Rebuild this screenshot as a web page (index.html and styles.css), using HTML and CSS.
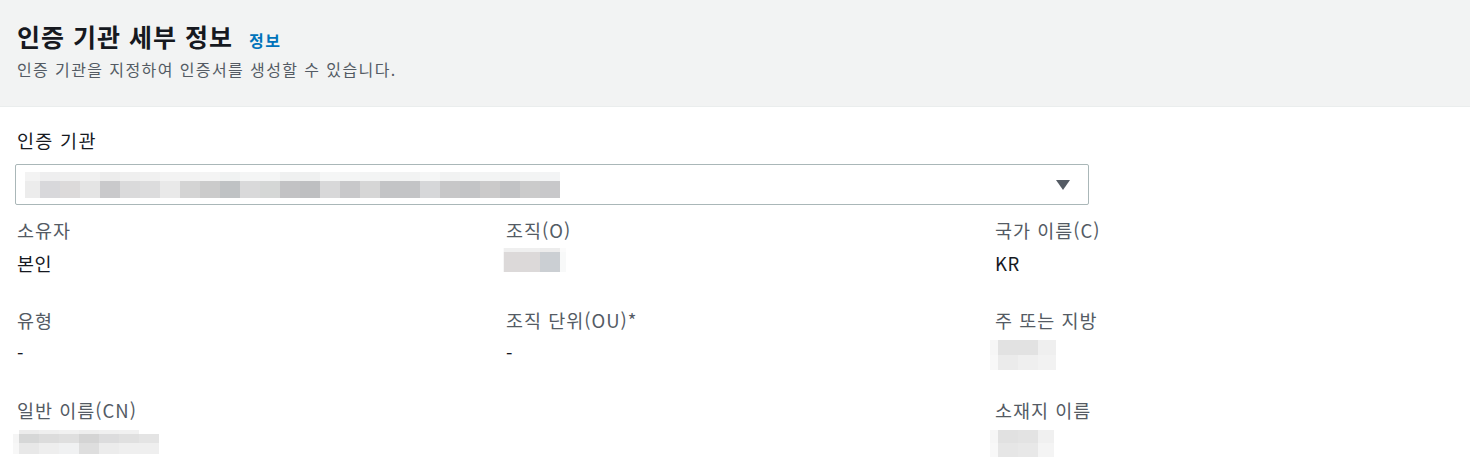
FILE: index.html
```html
<!DOCTYPE html>
<html lang="ko">
<head>
<meta charset="utf-8">
<link rel="stylesheet" href="styles.css">
</head>
<body>
<div class="panel">
  <header class="head">
    <div class="title-row">
      <h2 class="title">인증 기관 세부 정보</h2>
      <a class="info">정보</a>
    </div>
    <p class="desc">인증 기관을 지정하여 인증서를 생성할 수 있습니다.</p>
  </header>
  <div class="body">
    <div class="field">
      <label class="field-label">인증 기관</label>
      <div class="select">
        <div class="blur blur-select">
          <span style="width:15px;--t:#f3f3f3;--b:#ececec"></span><span style="--t:#eeeeef;--b:#d8d8db"></span><span style="--t:#efefef;--b:#dcdada"></span><span style="--t:#f0f0f0;--b:#e4e4e4"></span><span style="--t:#ececec;--b:#c9c9cb"></span><span style="--t:#efefef;--b:#dadadb"></span><span style="--t:#f0f0f0;--b:#dcdcdd"></span><span style="--t:#f3f3f3;--b:#e9e9e9"></span><span style="--t:#f3f3f3;--b:#d4d4d4"></span><span style="--t:#f4f4f4;--b:#cbcbcb"></span><span style="--t:#f0f2f2;--b:#bfc2c4"></span><span style="--t:#f4f5f5;--b:#d9d9da"></span><span style="--t:#f4f5f5;--b:#d5d7d6"></span><span style="--t:#eff0f0;--b:#c2c2c4"></span><span style="--t:#eff0f0;--b:#bebfc1"></span><span style="--t:#f5f6f6;--b:#d8d8d9"></span><span style="--t:#f4f5f5;--b:#c8c8ca"></span><span style="--t:#f3f4f4;--b:#d6d6d6"></span><span style="--t:#f2f3f3;--b:#c3c4c6"></span><span style="--t:#f2f3f3;--b:#c3c4c6"></span><span style="--t:#f5f6f6;--b:#d6d7d9"></span><span style="--t:#f1f2f2;--b:#c7c7c8"></span><span style="--t:#f3f4f4;--b:#c3c4c6"></span><span style="--t:#f3f4f4;--b:#cbcaca"></span><span style="--t:#f2f3f3;--b:#c2c3c5"></span><span style="--t:#f3f4f4;--b:#cbcbcb"></span><span style="--t:#f3f4f5;--b:#c8c8ca"></span>
        </div>
        <svg class="caret" width="14" height="10" viewBox="0 0 14 10"><path d="M0 0 H14 L7 10 Z" fill="#545b64"/></svg>
      </div>
    </div>
    <div class="grid">
      <div class="kv">
        <div class="k">소유자</div>
        <div class="v">본인</div>
      </div>
      <div class="kv">
        <div class="k">조직(O)</div>
        <div class="v"><div class="blur blur-org"><span style="width:1px;--t:#fafafa;--b:#f6f6f6"></span><span style="width:36px;--t:#efefef;--b:#dcd9d9"></span><span style="--t:#ececec;--b:#cbcfd3"></span><span style="width:6px;--t:#fbfbfb;--b:#f8f9f9"></span></div></div>
      </div>
      <div class="kv">
        <div class="k">국가 이름(C)</div>
        <div class="v">KR</div>
      </div>
      <div class="kv">
        <div class="k">유형</div>
        <div class="v">-</div>
      </div>
      <div class="kv">
        <div class="k">조직 단위(OU)*</div>
        <div class="v">-</div>
      </div>
      <div class="kv">
        <div class="k">주 또는 지방</div>
        <div class="v"><div class="blur blur-state"><span style="width:8px;--t:#f6f6f6;--b:#f8f8f8"></span><span style="--t:#e2e2e2;--b:#ebebeb"></span><span style="--t:#e2e2e2;--b:#efefef"></span><span style="width:18px;--t:#efefef;--b:#f2f2f2"></span></div></div>
      </div>
      <div class="kv">
        <div class="k">일반 이름(CN)</div>
        <div class="v"><div class="blur blur-cn"><span style="width:6px;--t:#ffffff;--m:#f5f5f5;--b:#f7f7f7"></span><span style="--t:#ececec;--m:#d6d7d7;--b:#e8e8e8"></span><span style="--t:#efefef;--m:#dcdcdc;--b:#eeeeee"></span><span style="--t:#f1f1f1;--m:#dfdfdf;--b:#f0f1f2"></span><span style="--t:#eeeeee;--m:#d4d4d4;--b:#dedede"></span><span style="--t:#f0f0f0;--m:#dcdcdd;--b:#ececec"></span><span style="--t:#f1f1f1;--m:#e0e0e0;--b:#efefef"></span><span style="--t:#ffffff;--m:#e4e4e4;--b:#efefef"></span></div></div>
      </div>
      <div class="kv"></div>
      <div class="kv">
        <div class="k">소재지 이름</div>
        <div class="v"><div class="blur blur-state blur-loc"><span style="width:8px;--t:#f6f6f6;--b:#f8f8f8"></span><span style="--t:#e1e1e1;--b:#e6e6e6"></span><span style="--t:#e3e3e3;--b:#e8e8e8"></span><span style="width:16px;--t:#f0f0f0;--b:#f4f4f4"></span></div></div>
      </div>
    </div>
  </div>
</div>
</body>
</html>
```
FILE: styles.css
```css
* { box-sizing: border-box; }
html, body { margin: 0; padding: 0; background: #ffffff; }
body {
  font-family: "Noto Sans CJK KR", "Noto Sans", sans-serif;
  color: #16191f;
  width: 1470px;
  height: 466px;
  overflow: hidden;
}
.head {
  background: #f2f3f3;
  border-bottom: 1px solid #eaeded;
  height: 107px;
  padding: 18px 17px 0;
}
.title-row { display: flex; align-items: baseline; gap: 16px; }
.title {
  margin: 0;
  font-size: 25px;
  font-weight: 700;
  letter-spacing: 1px;
  line-height: 36px;
  color: #16191f;
}
.info {
  font-size: 16px;
  font-weight: 700;
  letter-spacing: 1.5px;
  color: #0073bb;
}
.desc {
  margin: 3px 0 0;
  font-size: 16px;
  letter-spacing: 1.4px;
  line-height: 24px;
  color: #545b64;
}
.body { padding: 18px 15px 0 15px; }
.field { width: 1074px; }
.field-label {
  display: block;
  padding-left: 2px;
  font-size: 18.5px;
  letter-spacing: 1.3px;
  line-height: 30px;
  color: #16191f;
  margin-bottom: 9px;
}
.select {
  height: 41px;
  border: 1px solid #aab7b8;
  border-radius: 2px;
  display: flex;
  align-items: center;
  justify-content: space-between;
  padding: 0 18px 0 9px;
}
.blur { display: flex; }
.blur span {
  display: block;
  width: 20px;
  height: 100%;
  background: linear-gradient(var(--t) 0 var(--s), var(--b) var(--s) 100%);
}
.blur-select { height: 26px; --s: 9px; margin-top: 1px; }
.caret { display: block; }
.grid {
  display: grid;
  grid-template-columns: 489px 489px 1fr;
  padding-left: 2px;
  margin-top: 10px;
}
.kv { height: 90px; }
.k {
  font-size: 18.5px;
  letter-spacing: 1px;
  line-height: 30px;
  color: #545b64;
}
.v {
  margin-top: 5px;
  font-size: 18.5px;
  letter-spacing: 0.6px;
  line-height: 26px;
  color: #16191f;
  height: 26px;
}
.blur-org { height: 24px; --s: 4px; margin-left: -3px; margin-top: -2px; }
.blur-state { height: 30px; --s: 15px; margin-left: -5px; margin-top: 2px; }
.blur-loc { height: 27px; --s: 13px; }
.blur-cn { height: 24px; margin-left: -4px; margin-top: 3px; }
.blur-cn span {
  background: linear-gradient(var(--t) 0 4px, var(--m) 4px 13px, var(--b) 13px 100%);
}
```
